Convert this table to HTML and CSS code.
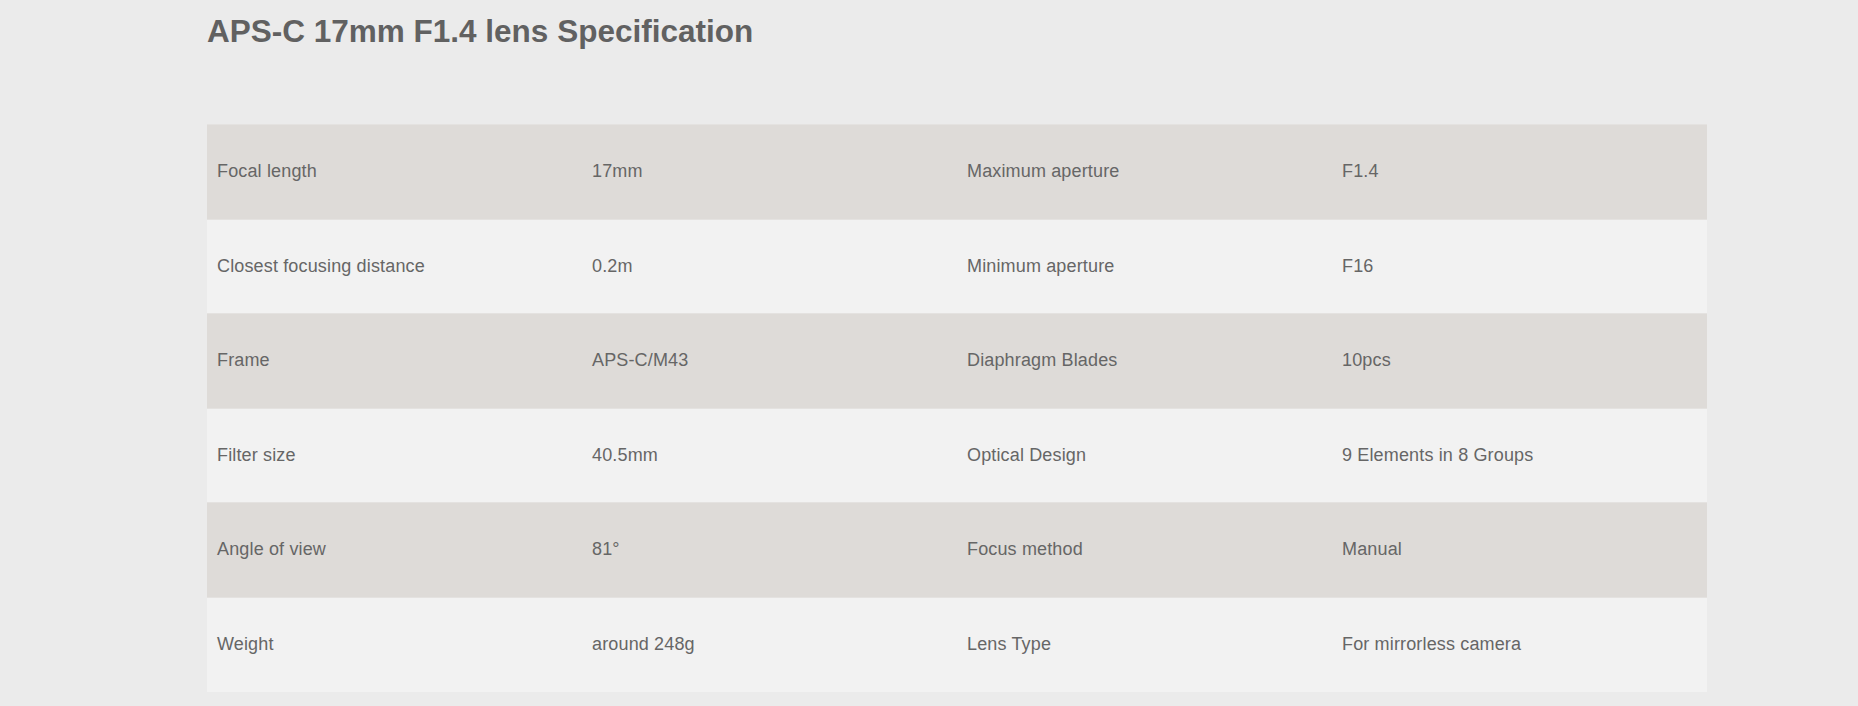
FILE: index.html
```html
<!DOCTYPE html>
<html lang="en">
<head>
  <meta charset="UTF-8" />
  <title>APS-C 17mm F1.4 lens Specification</title>
  <link rel="stylesheet" href="styles.css">
</head>
<body>

<div class="spec">
  <h1>APS-C 17mm F1.4 lens Specification</h1>

  <table class="spec-table">
    <tr class="dark">
      <td>Focal length</td>
      <td>17mm</td>
      <td>Maximum aperture</td>
      <td>F1.4</td>
    </tr>
    <tr class="light">
      <td>Closest focusing distance</td>
      <td>0.2m</td>
      <td>Minimum aperture</td>
      <td>F16</td>
    </tr>
    <tr class="dark">
      <td>Frame</td>
      <td>APS-C/M43</td>
      <td>Diaphragm Blades</td>
      <td>10pcs</td>
    </tr>
    <tr class="light">
      <td>Filter size</td>
      <td>40.5mm</td>
      <td>Optical Design</td>
      <td>9 Elements in 8 Groups</td>
    </tr>
    <tr class="dark">
      <td>Angle of view</td>
      <td>81°</td>
      <td>Focus method</td>
      <td>Manual</td>
    </tr>
    <tr class="light">
      <td>Weight</td>
      <td>around 248g</td>
      <td>Lens Type</td>
      <td>For mirrorless camera</td>
    </tr>
  </table>
</div>

</body>
</html>
```

FILE: styles.css
```css
body { margin: 0; background: #ebebeb; font-family: "Liberation Sans", Arial, sans-serif; color: #666; }
.spec { width: 1500px; padding: 13px 0 0 207px; }
.spec h1 { margin: 0 0 75px 0; font-size: 31.5px; line-height: 36px; font-weight: bold; color: #616161; }
.spec-table { width: 1500px; border-collapse: collapse; table-layout: fixed; }
.spec-table tr { height: 94.5px; }
.spec-table tr.dark { background: #dedbd8; }
.spec-table tr.light { background: #f2f2f2; }
.spec-table td { padding: 0 10px; font-size: 18px; letter-spacing: 0.15px; vertical-align: middle; border-top: 1px solid #e4e2e0; }
```
